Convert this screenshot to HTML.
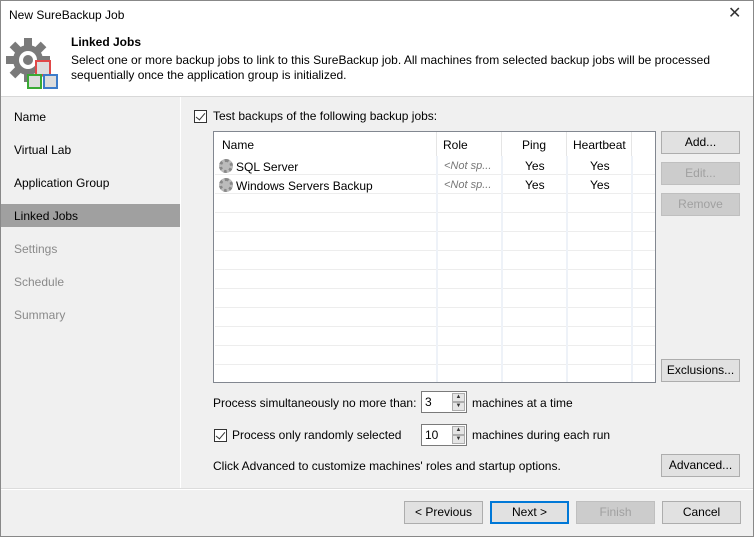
<!DOCTYPE html>
<html><head><style>
*{box-sizing:border-box;margin:0;padding:0}
body{width:754px;height:537px;overflow:hidden;font-family:"Liberation Sans",sans-serif;font-size:12px;color:#000;background:#f0f0f0;position:relative}
.a{position:absolute}
.btn{position:absolute;height:23px;width:79px;border:1px solid #adadad;background:#e1e1e1;text-align:center;line-height:21px;font-size:12px}
.dis{color:#a0a0a0;background:#cccccc;border-color:#bfbfbf}
.nav{position:absolute;left:14px;font-size:12px}
.cb{position:absolute;width:13px;height:13px;border:1px solid #333;background:#fff}
.cb:after{content:"";position:absolute;left:3px;top:0px;width:4px;height:8px;border:solid #333;border-width:0 1.5px 1.5px 0;transform:rotate(40deg)}
.hl{position:absolute;left:1px;width:440px;height:1px;background:#ededed}
.vl{position:absolute;top:24px;bottom:0;width:2px;background:#eef2f8}
.spin{position:absolute;width:46px;height:22px;border:1px solid #7a7a7a;background:#fff;padding-left:3px;line-height:20px}
.spin b{position:absolute;right:1px;width:13px;height:9px;border:1px solid #adadad;background:#e5e5e5;font-size:6px;line-height:7px;text-align:center;font-weight:normal;color:#333}
.gear{display:inline-block;width:14px;height:14px;border-radius:50%;border:3px dotted #888;background:#bbb;vertical-align:-2px;margin-right:3px}
</style></head><body>
<div class="a" style="left:0;top:0;width:754px;height:537px;border:1px solid #888"></div>
<div class="a" style="left:1px;top:1px;width:752px;height:95px;background:#fff"></div>
<div class="a" style="left:9px;top:8px;">New SureBackup Job</div>
<div class="a" style="left:728px;top:3px;font-size:16px;color:#333">✕</div>
<svg class="a" style="left:2px;top:34px" width="58" height="56" viewBox="0 0 58 56">
<g fill="#7a7a7a" transform="translate(26,26)">
<circle r="15"/>
<g id="t"><rect x="-4" y="-22" width="8" height="9"/></g>
<use href="#t" transform="rotate(45)"/><use href="#t" transform="rotate(90)"/><use href="#t" transform="rotate(135)"/><use href="#t" transform="rotate(180)"/><use href="#t" transform="rotate(225)"/><use href="#t" transform="rotate(270)"/><use href="#t" transform="rotate(315)"/>
</g>
<circle cx="26" cy="26" r="9" fill="#fff"/><circle cx="26" cy="26" r="5" fill="#7a7a7a"/>
<rect x="34" y="27" width="14" height="14" fill="#ddd" stroke="#e04848" stroke-width="2"/>
<rect x="26" y="41" width="13" height="13" fill="#ddd" stroke="#3aaa35" stroke-width="2"/>
<rect x="42" y="41" width="13" height="13" fill="#ddd" stroke="#3d7cc9" stroke-width="2"/>
</svg>
<div class="a" style="left:71px;top:35px;font-weight:bold">Linked Jobs</div>
<div class="a" style="left:71px;top:53px;line-height:15px">Select one or more backup jobs to link to this SureBackup job. All machines from selected backup jobs will be processed<br>sequentially once the application group is initialized.</div>
<div class="a" style="left:1px;top:96px;width:752px;height:1px;background:#d8d8d8"></div>
<div class="a" style="left:180px;top:97px;width:1px;height:392px;background:#fff"></div>
<div class="a" style="left:1px;top:204px;width:179px;height:23px;background:#a0a0a0"></div>
<div class="nav" style="top:110px">Name</div>
<div class="nav" style="top:143px">Virtual Lab</div>
<div class="nav" style="top:176px">Application Group</div>
<div class="nav" style="top:209px">Linked Jobs</div>
<div class="nav" style="top:242px;color:#8a8a8a">Settings</div>
<div class="nav" style="top:275px;color:#8a8a8a">Schedule</div>
<div class="nav" style="top:308px;color:#8a8a8a">Summary</div>

<div class="cb" style="left:194px;top:110px"></div>
<div class="a" style="left:213px;top:109px">Test backups of the following backup jobs:</div>
<div class="a" style="left:213px;top:131px;width:443px;height:252px;border:1px solid #828790;background:#fff;overflow:hidden">
<div class="hl" style="top:42px"></div><div class="hl" style="top:61px"></div><div class="hl" style="top:80px"></div><div class="hl" style="top:99px"></div><div class="hl" style="top:118px"></div><div class="hl" style="top:137px"></div><div class="hl" style="top:156px"></div><div class="hl" style="top:175px"></div><div class="hl" style="top:194px"></div><div class="hl" style="top:213px"></div><div class="hl" style="top:232px"></div>
<div class="vl" style="left:222px"></div><div class="vl" style="left:287px"></div><div class="vl" style="left:352px"></div><div class="vl" style="left:417px"></div>
<div class="a" style="left:222px;top:0;width:1px;height:24px;background:#e5e5e5"></div>
<div class="a" style="left:287px;top:0;width:1px;height:24px;background:#e5e5e5"></div>
<div class="a" style="left:352px;top:0;width:1px;height:24px;background:#e5e5e5"></div>
<div class="a" style="left:417px;top:0;width:1px;height:24px;background:#e5e5e5"></div>
<div class="a" style="left:8px;top:6px">Name</div>
<div class="a" style="left:229px;top:6px">Role</div>
<div class="a" style="left:308px;top:6px">Ping</div>
<div class="a" style="left:359px;top:6px">Heartbeat</div>
<div class="a" style="left:5px;top:27px"><span class="gear"></span>SQL Server</div>
<div class="a" style="left:5px;top:46px"><span class="gear"></span>Windows Servers Backup</div>
<div class="a" style="left:230px;top:28px;font-style:italic;font-size:11px;color:#777">&lt;Not sp...</div>
<div class="a" style="left:230px;top:47px;font-style:italic;font-size:11px;color:#777">&lt;Not sp...</div>
<div class="a" style="left:311px;top:27px">Yes</div><div class="a" style="left:311px;top:46px">Yes</div>
<div class="a" style="left:376px;top:27px">Yes</div><div class="a" style="left:376px;top:46px">Yes</div>
</div>
<div class="btn" style="left:661px;top:131px">Add...</div>
<div class="btn dis" style="left:661px;top:162px">Edit...</div>
<div class="btn dis" style="left:661px;top:193px">Remove</div>
<div class="btn" style="left:661px;top:359px">Exclusions...</div>

<div class="a" style="left:213px;top:396px">Process simultaneously no more than:</div>
<div class="spin" style="left:421px;top:391px">3<b style="top:1px">▲</b><b style="top:10px">▼</b></div>
<div class="a" style="left:472px;top:396px">machines at a time</div>
<div class="cb" style="left:214px;top:429px"></div>
<div class="a" style="left:232px;top:428px">Process only randomly selected</div>
<div class="spin" style="left:421px;top:424px">10<b style="top:1px">▲</b><b style="top:10px">▼</b></div>
<div class="a" style="left:472px;top:428px">machines during each run</div>
<div class="a" style="left:213px;top:459px">Click Advanced to customize machines' roles and startup options.</div>
<div class="btn" style="left:661px;top:454px">Advanced...</div>

<div class="a" style="left:1px;top:488px;width:752px;height:1px;background:#dcdcdc"></div>
<div class="a" style="left:1px;top:489px;width:752px;height:1px;background:#fff"></div>
<div class="btn" style="left:404px;top:501px">&lt; Previous</div>
<div class="btn" style="left:490px;top:501px;border:2px solid #0078d7;line-height:19px">Next &gt;</div>
<div class="btn dis" style="left:576px;top:501px">Finish</div>
<div class="btn" style="left:662px;top:501px">Cancel</div>
</body></html>
